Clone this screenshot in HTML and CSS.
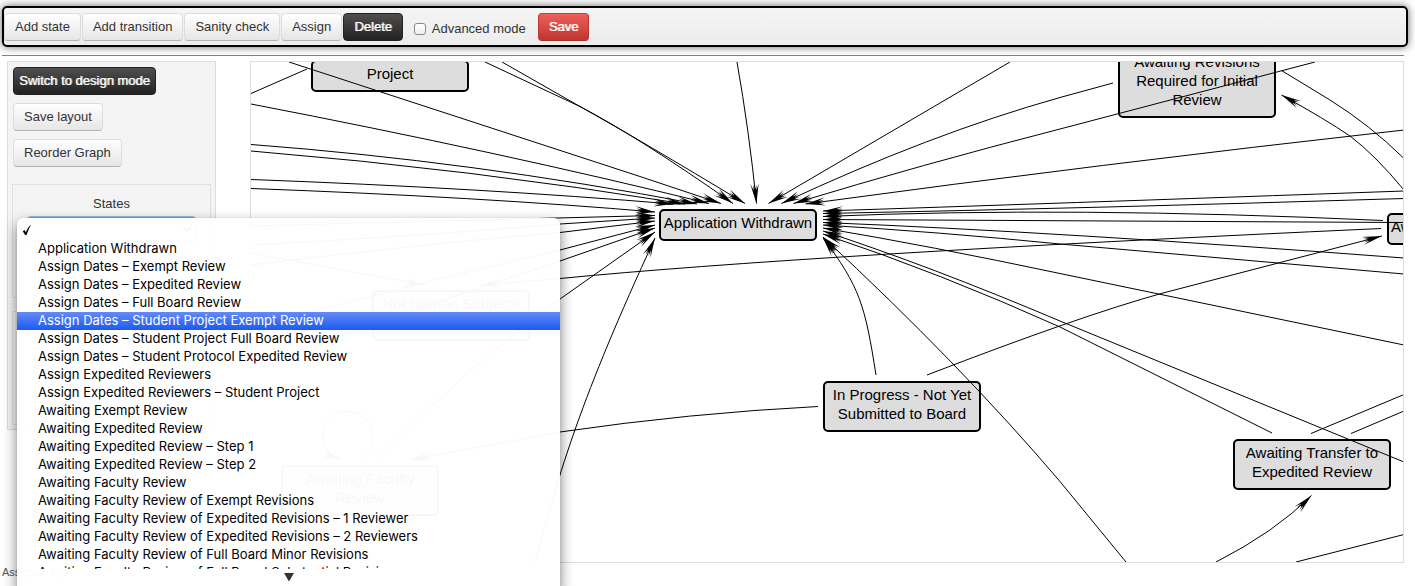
FILE: index.html
```html
<!DOCTYPE html>
<html lang="en">
<head>
<meta charset="utf-8">
<title>Workflow designer</title>
<link rel="stylesheet" href="styles.css">
</head>
<body>
<header class="toolbar">
  <button class="btn" type="button">Add state</button>
  <button class="btn" type="button">Add transition</button>
  <button class="btn" type="button">Sanity check</button>
  <button class="btn" type="button">Assign</button>
  <button class="btn btn-dark" type="button">Delete</button>
  <label class="advanced"><input class="tick" type="checkbox">Advanced mode</label>
  <button class="btn btn-danger" type="button">Save</button>
</header>
<main class="workspace">
  <aside class="panel">
    <button class="btn btn-dark btn-mode" type="button">Switch to design mode</button>
    <button class="btn" type="button">Save layout</button>
    <button class="btn" type="button">Reorder Graph</button>
    <section class="group group-states">
      <label class="group-title" for="state">States</label>
      <div class="picker">
        <select class="picker-select" id="state"><option></option></select>
        <div class="menu">
          <ul class="menu-list" role="listbox" aria-label="States">
            <li class="option" role="option"><svg class="check" width="10" height="12" viewBox="0 0 10 12"><path d="M.8 7.200L2.600 6L3.800 8.300C5 5.300 6.600 2.400 9.200 .4C7.500 3.600 5.800 7.200 4.600 11H3.100Z"/></svg></li>
            <li class="option" role="option">Application Withdrawn</li>
            <li class="option" role="option">Assign Dates – Exempt Review</li>
            <li class="option" role="option">Assign Dates – Expedited Review</li>
            <li class="option" role="option">Assign Dates – Full Board Review</li>
            <li class="option option-active" role="option" aria-selected="true">Assign Dates – Student Project Exempt Review</li>
            <li class="option" role="option">Assign Dates – Student Project Full Board Review</li>
            <li class="option" role="option">Assign Dates – Student Protocol Expedited Review</li>
            <li class="option" role="option">Assign Expedited Reviewers</li>
            <li class="option" role="option">Assign Expedited Reviewers – Student Project</li>
            <li class="option" role="option">Awaiting Exempt Review</li>
            <li class="option" role="option">Awaiting Expedited Review</li>
            <li class="option" role="option">Awaiting Expedited Review – Step 1</li>
            <li class="option" role="option">Awaiting Expedited Review – Step 2</li>
            <li class="option" role="option">Awaiting Faculty Review</li>
            <li class="option" role="option">Awaiting Faculty Review of Exempt Revisions</li>
            <li class="option" role="option">Awaiting Faculty Review of Expedited Revisions – 1 Reviewer</li>
            <li class="option" role="option">Awaiting Faculty Review of Expedited Revisions – 2 Reviewers</li>
            <li class="option" role="option">Awaiting Faculty Review of Full Board Minor Revisions</li>
            <li class="option" role="option">Awaiting Faculty Review of Full Board Substantial Revisions</li>
          </ul>
          <div class="menu-more"><svg width="10" height="9" viewBox="0 0 10 9"><path d="M0 0H10L5 8.500Z" fill="#333"/></svg></div>
        </div>
      </div>
    </section>
    <section class="group group-details"></section>
  </aside>
  <section class="canvas" aria-label="Workflow graph">
    <div class="node" style="left:60px;top:-2px">Project</div>
    <div class="node" style="left:867px;top:-14px">Awaiting Revisions Required for Initial Review</div>
    <div class="node" style="left:408px;top:147px">Application Withdrawn</div>
    <div class="node node-start" style="left:1136px;top:151px">Awaiting Review</div>
    <div class="node" style="left:572px;top:319px">In Progress - Not Yet Submitted to Board</div>
    <div class="node" style="left:982px;top:377px">Awaiting Transfer to Expedited Review</div>
    <div class="node" style="left:121px;top:228px">Not Human Subjects Research</div>
    <div class="node" style="left:30px;top:403px">Awaiting Faculty Review</div>
    <svg class="edges" aria-hidden="true">
      <defs>
        <marker id="tip" markerUnits="userSpaceOnUse" markerWidth="22" markerHeight="10" refX="20" refY="5" orient="auto">
          <path d="M20 5L0 .8L7 3.700L1 3.200L5 4.500V5.500L1 6.800L7 6.300L0 9.200Z"/>
        </marker>
      </defs>
      <g transform="translate(-251 -62)">
        <path d="M251 93.500L307 69"/>
        <path d="M1311 433.500L1404 394.500M1351 433.500L1404 411"/>
        <path d="M1296 562L1404 534.500"/>
        <path d="M1281.500 70.500L1330 100Q1370 125 1404 158.500"/>
        <g marker-end="url(#tip)">
          <path d="M289 62L640 176.500L721 203.500"/>
          <path d="M251 104Q500 152 709 203.500"/>
          <path d="M251 144.500Q470 161 697 204"/>
          <path d="M251 151Q470 169 685 204"/>
          <path d="M251 179.500Q480 188 673 204"/>
          <path d="M251 188.500Q480 197 655 212"/>
          <path d="M485 62L580 106.500Q640 138 733 203.500"/>
          <path d="M502 62L580 106.500Q640 140 745 203.500"/>
          <path d="M737 62Q749 130 756.500 203.500"/>
          <path d="M1010 62L768.500 203.500"/>
          <path d="M1113 83L1060 97.500Q930 134 781.500 203.500"/>
          <path d="M1315 62L1060 129Q920 165 793.500 203.500"/>
          <path d="M1404 130Q1100 164 805.500 204"/>
          <path d="M1404 191Q1040 204 823 211"/>
          <path d="M1404 198.500Q1100 208 823 213.500"/>
          <path d="M1383 220.500Q1070 206 823 216.500"/>
          <path d="M1404 222.500L823 219.500"/>
          <path d="M1404 258Q1060 232 823 222.500"/>
          <path d="M1404 274L1060 244Q940 232 823 225"/>
          <path d="M1404 345L1060 273.500Q930 246 823 228"/>
          <path d="M1404 462L1060 321Q930 266 823 231"/>
          <path d="M1272 433L1060 327Q940 273 823 234"/>
          <path d="M1126 562L1060 481.500Q960 364 823 237"/>
          <path d="M876 375C865 305 860 287 823 238"/>
          <path d="M927 375Q1080 316 1163 293L1382 236"/>
          <path d="M1381 228.500Q800 255 560 278.500L480 285"/>
          <path d="M818 406.500Q690 413 560 432L410 460"/>
          <path d="M251 226Q400 222 655 215.500"/>
          <path d="M251 245Q420 236 560 224L655 218"/>
          <path d="M251 265Q420 244 560 232.500L655 221"/>
          <path d="M280 320Q420 282 560 250L655 225"/>
          <path d="M300 350Q450 297 560 261L655 228"/>
          <path d="M377 460Q475 360 560 299L655 232"/>
          <path d="M535 562C560 470 580 400 655 238"/>
          <path d="M251 253Q340 270 425 285"/>
          <path d="M1216 562Q1275 532 1311.500 495.500"/>
          <path d="M1404 190Q1375 155 1350 136Q1325 119 1281.500 95"/>
          <path d="M360 458A25 25 0 1 0 332 456L341 460"/>
        </g>
      </g>
    </svg>
  </section>
</main>
<footer class="status">Assigned Types</footer>
</body>
</html>
```
FILE: styles.css
```css
* { box-sizing: border-box; }

body {
  margin: 0;
  padding: 6px 7px 0 2px;
  height: 100vh;
  overflow: hidden;
  background: #fff;
  color: #333;
  font: 13px/18px "Liberation Sans", Arial, sans-serif;
}

.toolbar {
  display: flex;
  align-items: center;
  gap: 1px;
  height: 41px;
  border: 2px solid #000;
  border-radius: 5px;
  background: linear-gradient(#f5f5f5, #ececec);
  box-shadow: 0 0 8px rgba(0, 0, 0, .6);
}

.btn {
  height: 28px;
  padding: 0 10px;
  border: 1px solid #ddd;
  border-bottom-color: #b3b3b3;
  border-radius: 4px;
  background: linear-gradient(#fff, #e6e6e6);
  color: #333;
  font: inherit;
  white-space: nowrap;
}

.btn-dark {
  border-color: #222;
  background: linear-gradient(#4f4f4f, #222);
  color: #fff;
  text-shadow: 1px 0 rgba(255, 255, 255, .7);
}

.btn-danger {
  border-color: #c9403a #bd362f #a52f29;
  background: linear-gradient(#ee5f5b, #bd362f);
  color: #fff;
  text-shadow: 1px 0 rgba(255, 255, 255, .7);
}

.advanced {
  display: flex;
  align-items: center;
  gap: 6px;
  margin: 4px 11px 0 10px;
}

.tick {
  appearance: none;
  width: 12px;
  height: 12px;
  margin: 0;
  border: 1px solid #8a8a8a;
  border-radius: 3px;
  background: linear-gradient(#fff, #eee);
}

.workspace {
  display: flex;
  align-items: flex-start;
  gap: 34px;
  margin: 8px 4px 0 0;
  padding: 5px 0 0 5px;
  border-top: 1px solid #3399d6;
}

.panel {
  display: flex;
  flex: none;
  flex-direction: column;
  align-items: flex-start;
  gap: 8px;
  width: 209px;
  padding: 5px 4px 4px;
  border: 1px solid #ddd;
  background: #f4f4f4;
}

.panel .btn { margin-left: 1px; }

.panel .btn-mode { padding: 0 5px; }

.group {
  align-self: stretch;
  height: 114px;
  border: 1px solid #e0e0e0;
}

.group-states {
  margin-top: 9px;
  padding: 10px 14px;
  text-align: center;
}

.group-details { margin-top: 5px; }

.group-title { display: block; }

.picker {
  position: relative;
  margin-top: 4px;
}

.picker-select {
  display: block;
  width: 100%;
  height: 24px;
  border: 1px solid #6ea6e0;
  border-radius: 4px;
  background: #fff;
  box-shadow: 0 0 0 1px #8fbbe8;
}

.menu {
  position: absolute;
  z-index: 2;
  top: 1px;
  left: -10px;
  width: 543px;
  padding-top: 4px;
  border-radius: 6px;
  background: rgba(255, 255, 255, .97);
  box-shadow: 0 6px 14px rgba(0, 0, 0, .5), 0 0 1px rgba(0, 0, 0, .3);
  color: #000;
  font: 13px/16px Inter, "Noto Sans", sans-serif;
  text-align: left;
}

.menu-list {
  height: 347px;
  margin: 0;
  padding: 0;
  overflow: hidden;
  list-style: none;
}

.option {
  height: 18px;
  padding-left: 21px;
  white-space: nowrap;
}

.option-active {
  background: linear-gradient(#648bf5, #1c5af2);
  color: #fff;
}

.check {
  display: block;
  margin-left: -16px;
  padding-top: 2px;
  height: 14px;
}

.menu-more {
  display: flex;
  justify-content: center;
  height: 24px;
  padding-top: 4px;
}

.menu-more svg { flex: none; }

.canvas {
  position: relative;
  flex: 1;
  min-width: 0;
  height: 502px;
  overflow: hidden;
  border: 1px solid #ddd;
  background: #fff;
}

.node {
  position: absolute;
  width: 158px;
  padding: 2px 2px 7px;
  border: 2px solid #000;
  border-radius: 5px;
  background: #ddd;
  color: #000;
  font-size: 15px;
  line-height: 19px;
  text-align: center;
}

.node-start { text-align: left; }

.edges {
  position: absolute;
  inset: 0;
  width: 100%;
  height: 100%;
}

.edges g > path {
  fill: none;
  stroke: #000;
  stroke-width: 1;
}

.status {
  color: #555;
  font-size: 11px;
}
```
